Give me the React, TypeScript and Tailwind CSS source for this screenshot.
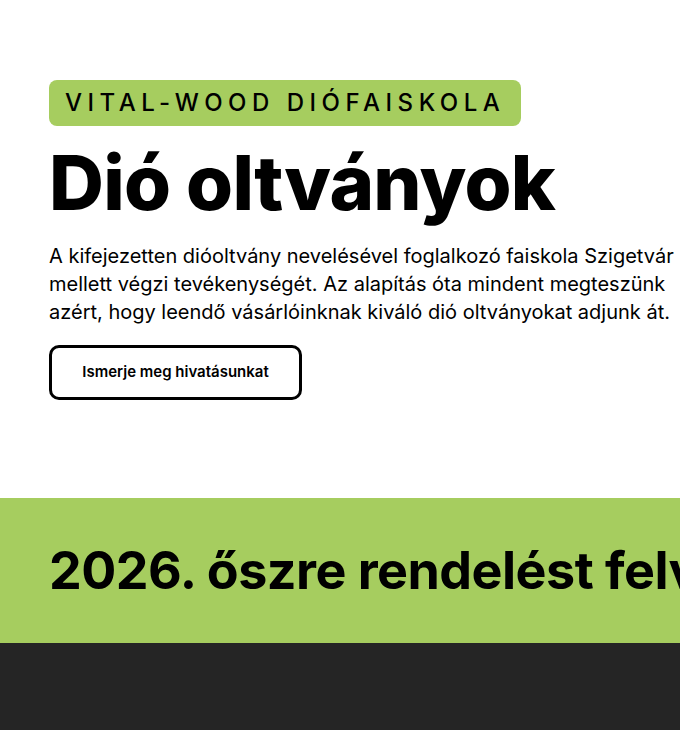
const font = { fontFamily: 'Inter, "Noto Sans", sans-serif' };

export default function App() {
    return (
        <div className="w-[680px] overflow-hidden bg-white text-black" style={font}>
            <section className="pl-[49px] pt-20 pb-[98px]">
                <span className="inline-block rounded-lg bg-[#a6cd5f] px-4 py-[7px] text-[24px] leading-8 font-medium tracking-[0.23em]">
                    VITAL-WOOD DIÓFAISKOLA
                </span>
                <h1 className="mt-3 text-[76px] leading-[88px] font-extrabold tracking-[-0.01em]">
                    Dió oltványok
                </h1>
                <p className="mt-4 w-[631px] text-[20px] leading-7">
                    A kifejezetten dióoltvány nevelésével foglalkozó faiskola
                    Szigetvár mellett végzi tevékenységét. Az alapítás óta
                    mindent megteszünk azért, hogy leendő vásárlóinknak kiváló
                    dió oltványokat adjunk át.
                </p>
                <button className="mt-[19px] h-[55px] w-[253px] rounded-[10px] border-[3px] border-black text-[15px] font-semibold">
                    Ismerje meg hivatásunkat
                </button>
            </section>
            <section className="flex h-[145px] items-center bg-[#a6cd5f] pl-[49px]">
                <h2 className="text-[52px] font-bold whitespace-nowrap tracking-[-0.01em]">
                    2026. őszre rendelést felveszünk
                </h2>
            </section>
            <section className="h-[87px] bg-[#252525]" />
        </div>
    );
}
